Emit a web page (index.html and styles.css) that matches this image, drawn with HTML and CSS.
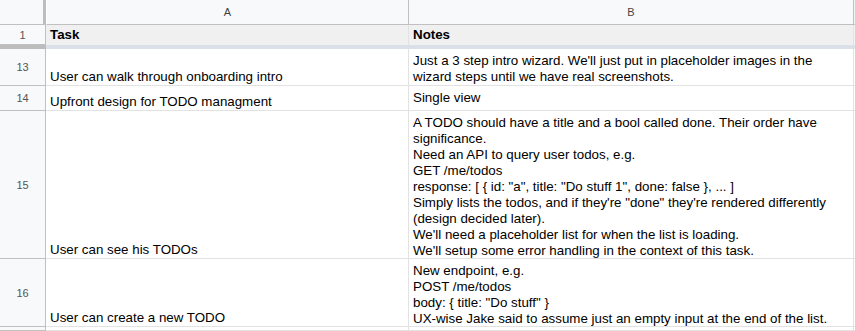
FILE: index.html
```html
<!DOCTYPE html>
<html lang="en">
<head>
  <meta charset="UTF-8">
  <title>Tasks sheet</title>
  <link rel="stylesheet" href="styles.css">
</head>
<body>
<div class="sheet">
  <div class="corner"></div>
  <div class="colhead">A</div>
  <div class="colhead">B</div>
  <div class="colhead rest"></div>

  <div class="rowhead">1</div>
  <div class="cell title">Task</div>
  <div class="cell title">Notes</div>
  <div class="cell title rest"></div>

  <div class="freeze gutter"></div>
  <div class="freeze"></div>
  <div class="freeze"></div>
  <div class="freeze"></div>

  <div class="rowhead">13</div>
  <div class="cell">User can walk through onboarding intro</div>
  <div class="cell notes">Just a 3 step intro wizard. We'll just put in placeholder images in the wizard steps until we have real screenshots.</div>
  <div class="cell rest"></div>

  <div class="rowhead">14</div>
  <div class="cell">Upfront design for TODO managment</div>
  <div class="cell notes">Single view</div>
  <div class="cell rest"></div>

  <div class="rowhead">15</div>
  <div class="cell">User can see his TODOs</div>
  <div class="cell notes">A TODO should have a title and a bool called done. Their order have significance.
Need an API to query user todos, e.g.
GET /me/todos
response: [ { id: "a", title: "Do stuff 1", done: false }, ... ]
Simply lists the todos, and if they're "done" they're rendered differently (design decided later).
We'll need a placeholder list for when the list is loading.
We'll setup some error handling in the context of this task.</div>
  <div class="cell rest"></div>

  <div class="rowhead">16</div>
  <div class="cell">User can create a new TODO</div>
  <div class="cell notes">New endpoint, e.g.
POST /me/todos
body: { title: "Do stuff" }
UX-wise Jake said to assume just an empty input at the end of the list.</div>
  <div class="cell rest"></div>

  <div class="rowhead"></div>
  <div class="cell"></div>
  <div class="cell"></div>
  <div class="cell rest"></div>
</div>
</body>
</html>
```

FILE: styles.css
```css
body {
  margin: 0;
  background: #fff;
  font-family: "Liberation Sans", Arial, sans-serif;
  overflow: hidden;
}

.sheet {
  display: grid;
  grid-template-columns: 46px 363px 445px 1fr;
  grid-template-rows: 25px 20px 4px 37px 25px 148px 68px 4px;
  width: 855px;
  height: 331px;
  font-size: 13.33px;
  line-height: 16px;
  color: #000;
}

.sheet > div {
  box-sizing: border-box;
  overflow: hidden;
}

.corner {
  background: #f8f9fa;
  border-bottom: 1px solid #c0c0c0;
  border-right: 4px solid #bdbdbd;
  margin-right: -1px;
}

.colhead {
  background: #f8f9fa;
  border-bottom: 1px solid #c0c0c0;
  border-right: 1px solid #c0c0c0;
  color: #444;
  font-size: 11px;
  display: flex;
  align-items: center;
  justify-content: center;
}

.colhead:nth-child(2) {
  border-left: 1px solid #fff;
}

.rowhead {
  background: #f8f9fa;
  border-right: 1px solid #c0c0c0;
  border-bottom: 1px solid #c0c0c0;
  color: #555;
  font-size: 11px;
  display: flex;
  align-items: center;
  justify-content: center;
}

.cell {
  border-right: 1px solid #e2e2e2;
  border-bottom: 1px solid #e2e2e2;
  padding: 0 3px 1px 4px;
  line-height: 14px;
  display: flex;
  align-items: flex-end;
}

.cell.notes {
  white-space: pre-line;
  display: block;
  line-height: 16px;
  padding-top: 4px;
  padding-bottom: 0;
}

.cell.title {
  background: #f0f0f0;
  font-weight: bold;
  align-items: center;
  border-bottom: none;
  padding-top: 1px;
}

.freeze {
  background: #dadfe8;
}

.freeze.gutter {
  background: #bdbdbd;
}

.rest {
  background: #fff;
}

.colhead.rest,
.cell.title.rest {
  background: #f3f3f3;
}
```
